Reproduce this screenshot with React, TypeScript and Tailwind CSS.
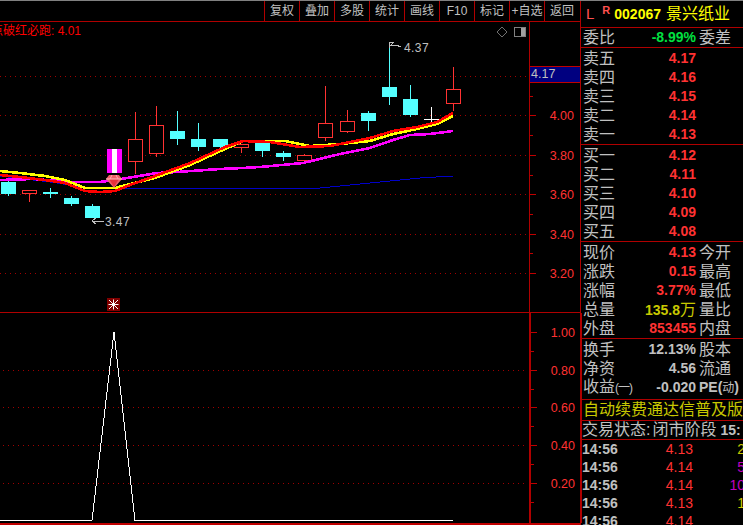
import React from "react";

const RED = "#ff3232";
const CYAN = "#54ffff";
const GRID = "#a00000";
const FONT = "'Liberation Sans', 'Noto Sans CJK SC', sans-serif";

const tools = ["复权", "叠加", "多股", "统计", "画线", "F10", "标记", "+自选", "返回"];

type C = { c: number; t: number; b: number; h: number; l: number; k: "up" | "down" };
const candles: C[] = [
  { c: 8, t: 182, b: 194, h: 178, l: 196, k: "down" },
  { c: 29, t: 190, b: 193, h: 190, l: 202, k: "up" },
  { c: 50, t: 192, b: 194, h: 188, l: 198, k: "down" },
  { c: 71, t: 198, b: 204, h: 196, l: 206, k: "down" },
  { c: 92, t: 206, b: 218, h: 204, l: 218, k: "down" },
  { c: 135, t: 139, b: 161, h: 112, l: 174, k: "up" },
  { c: 156, t: 125, b: 153, h: 106, l: 157, k: "up" },
  { c: 177, t: 131, b: 139, h: 111, l: 145, k: "down" },
  { c: 198, t: 139, b: 147, h: 123, l: 151, k: "down" },
  { c: 220, t: 139, b: 147, h: 139, l: 151, k: "down" },
  { c: 241, t: 144, b: 147, h: 144, l: 153, k: "up" },
  { c: 262, t: 143, b: 151, h: 141, l: 157, k: "down" },
  { c: 283, t: 153, b: 157, h: 151, l: 161, k: "down" },
  { c: 304, t: 155, b: 160, h: 154, l: 164, k: "up" },
  { c: 325, t: 123, b: 137, h: 86, l: 141, k: "up" },
  { c: 347, t: 121, b: 131, h: 110, l: 133, k: "up" },
  { c: 368, t: 113, b: 121, h: 111, l: 131, k: "down" },
  { c: 389, t: 87, b: 97, h: 42, l: 105, k: "down" },
  { c: 410, t: 99, b: 115, h: 85, l: 117, k: "down" },
  { c: 453, t: 89, b: 103, h: 67, l: 111, k: "up" },
];

const blue = "0,176 50,182 90,188 130,188 250,188 310,189 340,186 380,182 420,178 453,176";
const magenta =
  "0,180 33,179 72,182 100,182 115,180 127,178 157,173 177,172 220,169 243,168 260,167 303,163 340,154 370,148 393,140 410,135 430,134 453,131";
const yellow =
  "0,171 20,173 45,176 65,180 85,188 115,188 130,184 155,178 190,165 225,149 243,141 285,141 310,146 340,144 370,141 393,134 417,129 437,124 453,116";
const red =
  "0,175 20,177 45,180 65,183 85,191 100,192 115,191 130,185 155,176 190,163 225,147 243,141 270,142 300,147 330,146 370,138 393,131 417,127 437,122 453,113";

function MainChart() {
  return (
    <svg width="529" height="290" viewBox="0 22 529 290" className="block shrink-0" shapeRendering="crispEdges" style={{ fontFamily: FONT }}>
      {[76, 115, 155, 194, 234, 273].map((y) => (
        <line key={y} x1="0" x2="528" y1={y + 0.5} y2={y + 0.5} stroke={GRID} strokeDasharray="1 4" />
      ))}
      <polyline points={blue} fill="none" stroke="#0000c8" strokeWidth="1" />
      {candles.map((k) =>
        k.k === "up" ? (
          <g key={k.c} stroke={RED} fill="none">
            <line x1={k.c + 0.5} x2={k.c + 0.5} y1={k.h} y2={k.t} />
            <line x1={k.c + 0.5} x2={k.c + 0.5} y1={k.b} y2={k.l} />
            <rect x={k.c - 6.5} y={k.t + 0.5} width="14" height={k.b - k.t} fill="#000" />
          </g>
        ) : (
          <g key={k.c}>
            <line x1={k.c + 0.5} x2={k.c + 0.5} y1={k.h} y2={k.l} stroke={CYAN} />
            <rect x={k.c - 7} y={k.t} width="15" height={k.b - k.t} fill={CYAN} />
          </g>
        )
      )}
      <rect x="107" y="149" width="15" height="24" fill="#ff00ff" />
      <rect x="112" y="149" width="5" height="24" fill="#ffffff" />
      <polyline points={magenta} fill="none" stroke="#ff00ff" strokeWidth="2.6" />
      <polyline points={yellow} fill="none" stroke="#ffff00" strokeWidth="2.6" />
      <polyline points={red} fill="none" stroke="#ff0000" strokeWidth="2.6" />
      <g shapeRendering="auto">
        <polygon points="106,179 109,175 119,175 122,179 114,188" fill="#f0606a" />
        <polygon points="109,179 119,179 114,187" fill="#e8303c" />
        <polyline points="106,179 122,179" stroke="#ffc0c0" fill="none" />
        <line x1="112" y1="175" x2="110" y2="179" stroke="#ffb0b0" />
        <line x1="116" y1="175" x2="118" y2="179" stroke="#ffb0b0" />
      </g>
      <line x1="431.5" x2="431.5" y1="107" y2="122" stroke="#ffffff" />
      <line x1="424" x2="439" y1="119.5" y2="119.5" stroke="#ffffff" />
      <g stroke="#c0c0c0" fill="none">
        <polyline points="96,218 92,221 96,224" />
        <line x1="93" x2="104" y1="221.5" y2="221.5" />
        <line x1="389.5" x2="389.5" y1="42" y2="48" />
        <polyline points="390,42 394,42 391,45 396,45 401,47" />
      </g>
      <g fill="#c0c0c0" fontSize="12">
        <text x="105" y="226" letterSpacing="0.4">3.47</text>
        <text x="404" y="52" letterSpacing="0.4">4.37</text>
      </g>
      <text x="-9" y="35" fontSize="12" fill="#ff0000">
        点破红必跑: 4.01
      </text>
      <polygon points="502,27 507,32 502,37 497,32" fill="none" stroke="#707070" shapeRendering="auto" />
      <rect x="514.5" y="27.5" width="11" height="9" rx="1" fill="none" stroke="#808080" />
      <rect x="521" y="28" width="4" height="8" fill="#a0a0a0" />
      <rect x="107" y="298" width="13" height="13" fill="#800000" />
      <g stroke="#ffffff" shapeRendering="auto">
        <line x1="109" y1="300" x2="118" y2="309" />
        <line x1="118" y1="300" x2="109" y2="309" />
        <line x1="113.5" y1="299.5" x2="113.5" y2="309.5" />
        <line x1="108.5" y1="304.5" x2="118.5" y2="304.5" />
      </g>
    </svg>
  );
}

function Axis({ items, minor, h, y0 }: { items: [number, string][]; minor: number[]; h: number; y0: number }) {
  return (
    <svg width="50" height={h} viewBox={`530 ${y0} 50 ${h}`} className="block shrink-0" shapeRendering="crispEdges" style={{ fontFamily: FONT }}>
      {items.map(([y, t]) => (
        <g key={t}>
          <line x1="530" x2="536" y1={y + 0.5} y2={y + 0.5} stroke="#c00000" />
          <text x="574" y={y + 5} textAnchor="end" fontSize="12.5" fill={RED}>
            {t}
          </text>
        </g>
      ))}
      {minor.map((y) => (
        <line key={y} x1="530" x2="533" y1={y + 0.5} y2={y + 0.5} stroke="#c00000" />
      ))}
    </svg>
  );
}

function LowerChart() {
  return (
    <svg width="529" height="210" viewBox="0 313 529 210" className="block shrink-0" shapeRendering="crispEdges">
      {[370, 407, 445, 483].map((y) => (
        <line key={y} x1="3" x2="526" y1={y + 0.5} y2={y + 0.5} stroke={GRID} strokeDasharray="1 4" />
      ))}
      <polyline points="0,520.5 92,520.5 114,332 135,520.5 453,520.5" fill="none" stroke="#ffffff" />
    </svg>
  );
}

function Row({ l, v, r, c = RED }: { l: React.ReactNode; v: React.ReactNode; r?: React.ReactNode; c?: string }) {
  return (
    <div className="flex h-[19px] items-center whitespace-nowrap pl-[2px] text-[16px] leading-[19px] text-[#c0c0c0]">
      <span className="w-[48px] shrink-0">{l}</span>
      <span className="w-[65px] shrink-0 text-right text-[14px] font-bold" style={{ color: c }}>
        {v}
      </span>
      {r && <span className="ml-[3px] shrink-0">{r}</span>}
    </div>
  );
}

function Tick({ p, v, c }: { p: string; v?: string; c?: string }) {
  return (
    <div className="flex h-[18px] items-center whitespace-nowrap pl-[1px] text-[14px] font-bold leading-[18px]">
      <span className="w-[60px] shrink-0 text-[#c0c0c0]">14:56</span>
      <span className="w-[51px] shrink-0 text-right font-normal" style={{ color: RED }}>
        {p}
      </span>
      <span className="ml-auto mr-[-2px] font-normal" style={{ color: c }}>
        {v}
      </span>
    </div>
  );
}

export default function App() {
  return (
    <div className="flex h-[525px] w-[743px] flex-col overflow-hidden bg-black" style={{ fontFamily: FONT }}>
      <div className="h-px shrink-0 bg-[#808080]" />
      <div className="flex min-h-0 flex-1">
        <div className="flex w-[580px] shrink-0 flex-col">
          <div className="flex h-[21px] shrink-0 justify-end border-b border-[#b00000] pr-[1px] text-[12px] leading-[20px] text-[#c0c0c0]">
            {tools.map((t) => (
              <div key={t} className="flex w-[35px] items-center justify-center whitespace-nowrap border-l border-[#b00000]">
                {t}
              </div>
            ))}
          </div>
          <div className="flex h-[291px] shrink-0 border-b border-[#b00000]">
            <MainChart />
            <div className="relative flex-1 border-l border-[#b00000]">
              <Axis
                h={290}
                y0={22}
                items={[[115, "4.00"], [155, "3.80"], [194, "3.60"], [234, "3.40"], [273, "3.20"]]}
                minor={[96, 135, 175, 214, 253]}
              />
              <div className="absolute left-0 right-0 top-[44px] flex h-[17px] items-center border-y border-[#c00000] bg-[#000080] pl-[1px] text-[12.5px] text-[#c0c0c0]">
                4.17
              </div>
            </div>
          </div>
          <div className="flex h-[212px] shrink-0 border-b-2 border-[#c00000]">
            <LowerChart />
            <div className="flex-1 border-l-2 border-r border-[#b00000]">
              <Axis
                h={210}
                y0={313}
                items={[[332, "1.00"], [370, "0.80"], [407, "0.60"], [445, "0.40"], [483, "0.20"]]}
                minor={[351, 389, 426, 464, 502]}
              />
            </div>
          </div>
        </div>

        <div className="flex min-w-0 flex-1 flex-col overflow-hidden border-l border-[#b00000]">
          <div className="flex h-[27px] shrink-0 items-center whitespace-nowrap border-b border-[#b00000] text-[#ffff00]">
            <span className="ml-[5px] text-[15px] text-[#ff5050]">L</span>
            <span className="mb-[7px] ml-[8px] text-[11px] font-bold text-[#ff5050]">R</span>
            <span className="ml-[4px] text-[14px] font-bold">002067</span>
            <span className="ml-[5px] text-[16px]">景兴纸业</span>
          </div>
          <div className="h-[20px] shrink-0 border-b border-[#b00000]">
            <Row l="委比" v="-8.99%" r="委差" c="#00e040" />
          </div>
          <div className="h-[97px] shrink-0 border-b border-[#b00000] pt-px">
            <Row l="卖五" v="4.17" />
            <Row l="卖四" v="4.16" />
            <Row l="卖三" v="4.15" />
            <Row l="卖二" v="4.14" />
            <Row l="卖一" v="4.13" />
          </div>
          <div className="h-[97px] shrink-0 border-b border-[#b00000] pt-px">
            <Row l="买一" v="4.12" />
            <Row l="买二" v="4.11" />
            <Row l="买三" v="4.10" />
            <Row l="买四" v="4.09" />
            <Row l="买五" v="4.08" />
          </div>
          <div className="h-[97px] shrink-0 border-b border-[#b00000] pt-px">
            <Row l="现价" v="4.13" r="今开" />
            <Row l="涨跌" v="0.15" r="最高" />
            <Row l="涨幅" v="3.77%" r="最低" />
            <Row
              l="总量"
              v={
                <>
                  135.8<span className="text-[16px] font-normal">万</span>
                </>
              }
              r="量比"
              c="#c8c800"
            />
            <Row l="外盘" v="853455" r="内盘" />
          </div>
          <div className="h-[61px] shrink-0 border-b border-[#b00000] pt-px">
            <Row l="换手" v="12.13%" r="股本" c="#c0c0c0" />
            <Row l="净资" v="4.56" r="流通" c="#c0c0c0" />
            <Row
              l={
                <>
                  收益<span className="text-[12px] tracking-[-1px]">(一)</span>
                </>
              }
              v="-0.020"
              r={
                <>
                  <span className="text-[14px] font-bold">PE(</span>
                  <span className="text-[12px]">动</span>
                  <span className="text-[14px] font-bold">)</span>
                </>
              }
              c="#c0c0c0"
            />
          </div>
          <div className="flex h-[21px] shrink-0 items-center whitespace-nowrap border-b border-[#b00000] pl-[2px] text-[16px] text-[#c8c800]">
            自动续费通达信普及版
          </div>
          <div className="flex h-[19px] shrink-0 items-center whitespace-nowrap border-b border-[#b00000] pl-[1px] text-[16px] text-[#c0c0c0]">
            <span>交易状态:</span>
            <span className="ml-[2px]">闭市阶段</span>
            <span className="ml-[4px] text-[14px] font-bold">15:</span>
          </div>
          <Tick p="4.13" v="2" c="#c8c800" />
          <Tick p="4.14" v="5" c="#c000c0" />
          <Tick p="4.14" v="10" c="#c000c0" />
          <Tick p="4.13" v="1" c="#c8c800" />
          <Tick p="4.14" />
        </div>
      </div>
    </div>
  );
}
